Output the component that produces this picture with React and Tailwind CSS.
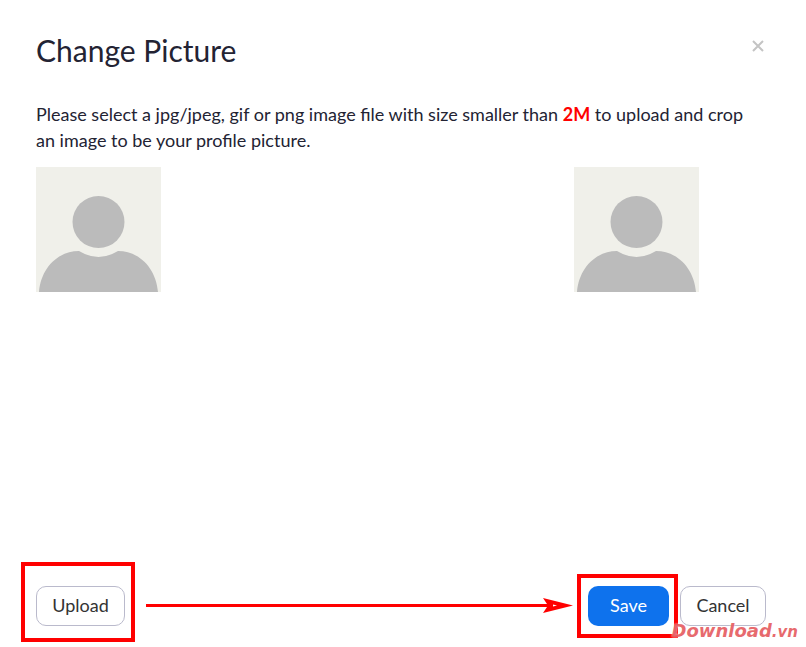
import { useState } from "react";

function Avatar({ label }) {
  return (
    <svg
      role="img"
      aria-label={label}
      viewBox="0 0 125 125"
      className="block size-[125px] bg-[#f0f0ea]">
      <circle cx="62.5" cy="55" r="26" fill="#bbbbbb" />
      <path
        d="M3 125C5 101 22 84 43 84Q53 90 62.5 90Q72 90 82 84C103 84 120 101 122 125Z"
        fill="#bbbbbb"
      />
    </svg>
  );
}

function Highlight({ className }) {
  return (
    <span
      aria-hidden="true"
      className={`pointer-events-none absolute border-4 border-[#ff0000] ${className}`}
    />
  );
}

function Arrow() {
  return (
    <div
      aria-hidden="true"
      className="mr-[15px] mb-px ml-[21px] flex grow items-center">
      <div className="-mr-2 h-[3px] grow bg-[#ff0000]" />
      <svg viewBox="0 0 30 15" className="h-[15px] w-[30px] shrink-0">
        <path d="M0 0L30 7.5L0 15L5 7.5Z" fill="#ff0000" />
        <path d="M10 6.5L14 7.5L10 8.5Z" fill="#ffffff" />
      </svg>
    </div>
  );
}

export default function App() {
  const [open, setOpen] = useState(true);
  const close = () => setOpen(false);

  if (!open) return null;

  return (
    <div
      role="dialog"
      aria-labelledby="dialog-title"
      className="flex min-h-screen flex-col bg-white pt-8 pr-10 pb-[21px] pl-9 font-['Lato',sans-serif] text-[18px] text-[#232333]">
      <header className="flex items-start justify-between">
        <h1 id="dialog-title" className="text-[30px] leading-9">
          Change Picture
        </h1>
        <button
          type="button"
          aria-label="Close"
          onClick={close}
          className="mt-1.5 flex size-4 items-center justify-center text-[#c4c4c4]">
          <svg viewBox="0 0 12 12" className="size-3">
            <path d="M1 1L11 11M11 1L1 11" stroke="currentColor" strokeWidth="2" />
          </svg>
        </button>
      </header>

      <p className="mt-[33px] pr-3 leading-[26px]">
        Please select a jpg/jpeg, gif or png image file with size smaller than{" "}
        <strong className="font-bold text-[#ff0000]">2M</strong> to upload and
        crop an image to be your profile picture.
      </p>

      <div className="mt-[14px] flex justify-between pr-[67px]">
        <Avatar label="Current picture" />
        <Avatar label="Preview" />
      </div>

      <footer className="relative mt-auto flex items-center">
        <div className="relative">
          <button
            type="button"
            className="block h-10 w-[89px] rounded-[10px] border border-[#babacc] pb-0.5 text-[#333333]">
            Upload
          </button>
          <Highlight className="-top-6 -right-[10px] -bottom-4 -left-[15px]" />
        </div>

        <Arrow />

        <div className="relative mr-[11px]">
          <button
            type="button"
            onClick={close}
            className="block h-10 w-[81px] rounded-[10px] bg-[#0e72ed] pb-0.5 text-white">
            Save
          </button>
          <Highlight className="-top-3 -right-[9px] -bottom-3 -left-[11px]" />
        </div>
        <button
          type="button"
          onClick={close}
          className="h-10 w-[86px] rounded-[10px] border border-[#babacc] pb-0.5 text-[#333333]">
          Cancel
        </button>

        {/* Site mark */}
        <span className="pointer-events-none absolute -right-8 -bottom-[18px] font-['DejaVu_Sans',sans-serif] text-[18px] leading-6 font-bold text-[#e0393e]/75 italic [text-shadow:0_0_2px_#fff]">
          Download<span className="text-[15px]">.vn</span>
        </span>
      </footer>
    </div>
  );
}
